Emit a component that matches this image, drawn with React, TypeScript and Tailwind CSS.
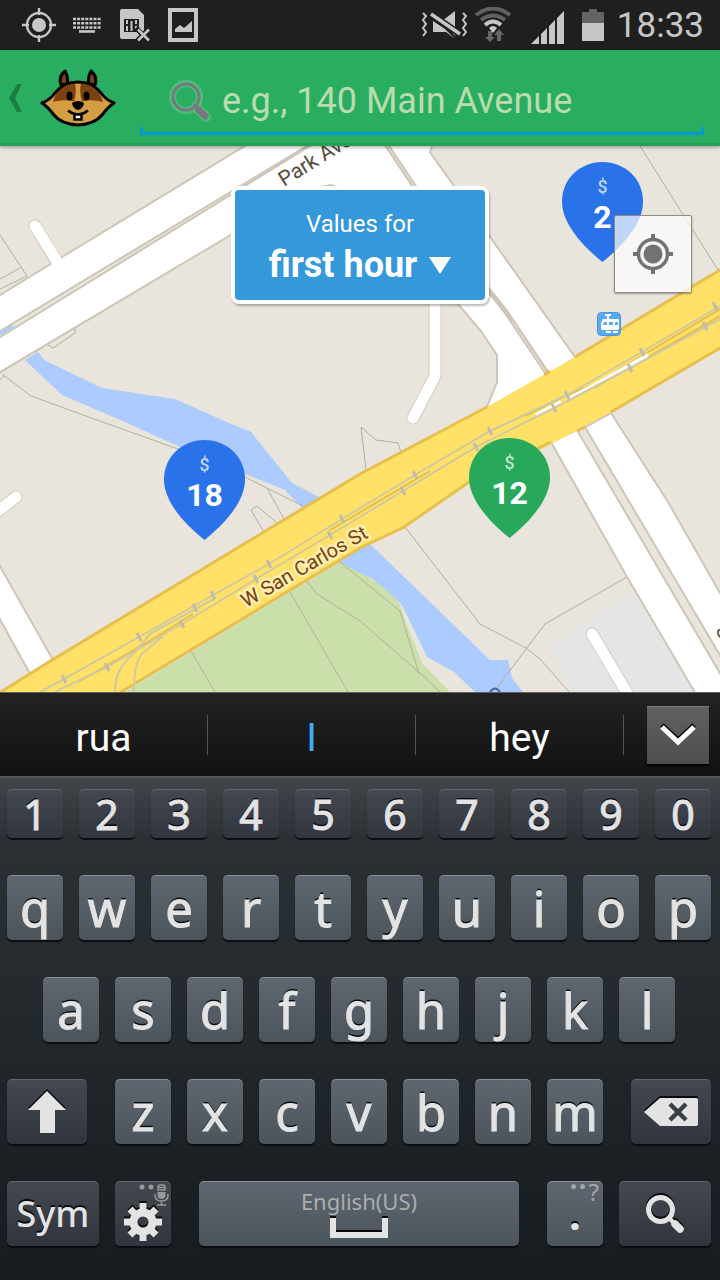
import React from 'react';

const keyBase =
  'flex items-center justify-center rounded-[5px] border-t leading-none text-[#e3e3e3] shadow-[0_2px_1px_#0b0d0f] [text-shadow:0_-2px_0_#08090a]';
const heavyText = '[-webkit-text-stroke-width:1px]';
const darkKey = 'border-[#62666c] bg-linear-to-b from-[#444850] to-[#31353e]';
const lightKey = 'border-[#8b9096] bg-linear-to-b from-[#5e666f] to-[#4c555c]';
const raised = '[filter:drop-shadow(0_-2px_0_#08090a)]';
const flatText = '[text-shadow:none]';

function LetterKey({ label }: { label: string }) {
  return (
    <button type="button" className={`${keyBase} ${heavyText} ${lightKey} h-[65px] min-w-0 flex-1 text-[49px]`}>
      {label}
    </button>
  );
}

function StatusBar() {
  return (
    <div className="flex h-[50px] shrink-0 items-center justify-between bg-[#1f1f1f] pr-4 pl-[22px] text-[#c6c6c6]">
      <div className="flex items-center">
        <svg width="34" height="34" viewBox="0 0 34 34" fill="none" stroke="currentColor" strokeWidth="2.400">
          <circle cx="17" cy="17" r="12" />
          <circle cx="17" cy="17" r="7" fill="currentColor" stroke="none" />
          <path d="M17 0v7M17 27v7M0 17h7M27 17h7" />
        </svg>
        <svg className="ml-4" width="30" height="18" viewBox="0 0 30 18" stroke="currentColor" strokeWidth="2.6">
          <path d="M1 3h28M1 7.300h28M1 11.500h28" strokeDasharray="3 1.100" />
          <path d="M7 15.500h16" />
        </svg>
        <svg className="ml-[18px]" width="32" height="34" viewBox="0 0 32 34">
          <path d="M2 1h16l6 6v16l-5 5-2 3H2Q0 31 0 29V3Q0 1 2 1z" fill="currentColor" />
          <path d="M4 11h15v13H4z" fill="#1f1f1f" />
          <path d="M7 12v4m0 2v5m4.500-10v10m4.500-11v4m0 2v4" stroke="currentColor" strokeWidth="2" />
          <path d="M16 20l14 14M30 20L16 34" stroke="#1f1f1f" strokeWidth="5" />
          <path d="M18 21.500l11 11M29 21.500l-11 11" stroke="currentColor" strokeWidth="2.600" />
        </svg>
        <svg className="ml-4" width="30" height="34" viewBox="0 0 30 34">
          <path d="M2 2h26v30H2z" fill="none" stroke="currentColor" strokeWidth="4" />
          <path d="M7 24v-3l5-4 4 3 8-7v11z" fill="currentColor" />
        </svg>
      </div>
      <div className="flex items-center">
        <svg width="48" height="32" viewBox="0 0 48 32">
          <path d="M2 4l3 3-3 4 3 4-3 4 3 4-3 4M42 4l3 3-3 4 3 4-3 4 3 4-3 4" fill="none" stroke="currentColor" strokeWidth="2" />
          <path d="M34 2v25L21 12zM12 12l12 8 10 10-9-7H12z" fill="currentColor" />
          <path d="M10 5l30 21" stroke="#1f1f1f" strokeWidth="7" />
          <path d="M10 5l29 20" stroke="currentColor" strokeWidth="3.500" />
        </svg>
        <svg className="ml-1" width="38" height="36" viewBox="0 0 38 36" fill="none">
          <path d="M3 8Q20-5 37 8M8 13Q20 4 32 13" stroke="#616161" strokeWidth="4" />
          <path d="M12 18q8-7 16 0" stroke="currentColor" strokeWidth="4" />
          <path d="M16 21q4-4 8 0l-4 5z" fill="currentColor" />
          <path d="M15 24h4v6h3l-5 5-5-5h3zM24 34v-6h-3l5-6 5 6h-3v6z" fill="#666" />
        </svg>
        <svg className="mt-[3px] ml-5" width="34" height="34" viewBox="0 0 34 34" fill="currentColor">
          <path d="M0 34l8-8v8zM10 24l6-6v16h-6zM18 16l6-6v24h-6zM26 8l7-7v33h-7z" />
        </svg>
        <svg className="mb-px ml-4" width="24" height="34" viewBox="0 0 24 34">
          <path d="M8 1h8v3h7v12H1V4h7z" fill="#646464" />
          <path d="M1 15h22v18H1z" fill="currentColor" />
        </svg>
        <span className="ml-3 text-[35px] leading-none">18:33</span>
      </div>
    </div>
  );
}

function ChipmunkLogo() {
  return (
    <svg width="76" height="58" viewBox="0 0 76 58" aria-hidden="true">
      <g stroke="#000" strokeWidth="3" strokeLinejoin="round">
        <path d="M21 16Q18 8 25 2q4 7 2 13zM55 16Q58 8 51 2q-4 7-2 13z" fill="#7b4312" />
        <path d="M2 34Q10 31 15 24 24 13 38 13t23 11q5 7 13 10-6 4-12 12-7 9-24 10-17-1-24-10Q8 38 2 34z" fill="#d69e42" />
      </g>
      <path d="M13 33Q17 17 35 14.500q2 8-1 18Q24 30 13 33zM63 33Q59 17 41 14.500q-2 8 1 18Q52 30 63 33z" fill="#7b4312" />
      <ellipse cx="29.500" cy="27" rx="3" ry="4.500" />
      <ellipse cx="46.500" cy="27" rx="3" ry="4.500" />
      <path d="M32 34q6-4 12 0-1 6-6 7-5-1-6-7z" />
      <path d="M28 41.500q10 8 20 0" fill="none" stroke="#000" strokeWidth="2.500" />
      <path d="M34.500 45.500h7v5h-7z" fill="#fff" stroke="#000" strokeWidth="2.500" />
    </svg>
  );
}

function Header() {
  return (
    <header className="relative z-10 flex h-24 shrink-0 items-center border-b-3 border-[#25a056] bg-[#29ae61] pr-4 pl-2 shadow-[0_1px_4px_#0006]">
      <button type="button" aria-label="Back" className="flex items-center pt-[3px]">
        <svg width="15" height="28" viewBox="0 0 15 28">
          <path d="M9 0h5L7 14l7 14H9L1 14z" fill="#1c7e45" />
        </svg>
        <span className="ml-[17px]">
          <ChipmunkLogo />
        </span>
      </button>
      <div className="ml-6 flex h-full min-w-0 flex-1 flex-col justify-end pb-2">
        <label className="flex h-[68px] items-center pt-4 pl-[28px]">
          <svg className="shrink-0" width="44" height="44" viewBox="0 0 44 44" aria-label="Search" fill="none" strokeLinecap="round">
            <g stroke="#6bc48f" opacity=".6">
              <circle cx="18" cy="18" r="13.500" strokeWidth="7" />
              <path d="M28 28l10 10" strokeWidth="10" />
            </g>
            <g stroke="#777a7c">
              <circle cx="18" cy="18" r="13" strokeWidth="3" />
              <path d="M27 27l3 3" strokeWidth="4" />
              <path d="M31 31l6 6" strokeWidth="7" />
            </g>
          </svg>
          <input
            type="text"
            placeholder="e.g., 140 Main Avenue"
            className="ml-[10px] w-full min-w-0 bg-transparent text-[36px] leading-none text-white outline-none placeholder:text-[#b9dcaf]"
          />
        </label>
        <div className="h-2 border-x-3 border-b-3 border-[#0899d2]" />
      </div>
    </header>
  );
}

const railTicks: [number, number][] = [
  [64, 679], [139, 637], [213, 595], [269, 564], [342, 519], [415, 475], [490, 431], [567, 395], [642, 352], [715, 306],
  [107, 667], [182, 624], [195, 608], [256, 579], [330, 535], [403, 491], [476, 447], [554, 408], [630, 368], [705, 326],
];

function StreetMap() {
  return (
    <svg className="absolute inset-0 h-full w-full" viewBox="0 146 720 546" preserveAspectRatio="xMidYMid slice" role="img" aria-label="Map">
      <path d="M0 146h720v546H0z" fill="#e9e5dc" />
      <path d="M550 645l83-53 62 100H574z" fill="#e5e5e5" />
      <path
        d="M25 360l13-8 6 8 58 28 73 11 47 21 29 12 41 51 27 14 51 47 120 116h18l4 18 11 14h-48l-21-20-27-15-24-50-4-5-29-25h-20l-12-13-35-55-18-19-40-16-65-27-55-25-63-27z"
        fill="#accbff"
      />
      <path d="M125 692L340 562l18 10 10 5 15 10 16 15 6 18 17 43 28 29z" fill="#cbdfab" />
      <g fill="none" stroke="#b4ae9b" strokeWidth="1">
        <path d="M0 380l5-5M2 374l29 22 66 24 81 29 67 28 58 29M0 235l27 41M0 279l20-11M0 289l27-13M48 345l5 3 22-15v-4M640 146l78 124M267 488l17 31M264 532l-13-22 6-4 20 17" />
        <path d="M405 527l75 97 46 24 15 12 28 32M627 577l-82 47-19 25-29 39M306 580l11 14 43 27 61 53 19 18M340 562l60 49 19 63M290 592l58 100M191 651l24 41M366 470l-5-43 15 13 22 3 3 9" />
      </g>
      <path d="M35 226l24 40M435 300v76l-22 42M-6 514l22-17M592 634l38 64" fill="none" stroke="#d3ccbf" strokeWidth="13" strokeLinecap="round" strokeLinejoin="round" />
      <g fill="#fff" stroke="#cdc6b8" strokeWidth="2">
        <path d="M-3 297l65-40 186-113h62L-3 333zM-3 339l316-195h120l-3 8 145 205v60l-88-10 10-25v-27l-16-24-23-27-78-104-49-15-26 5-76 46L-3 374z" />
        <path d="M551 442l26-12 147 250v16h-27l-70-119zM585 427l26-14 57 89 56 98v62zM-3 561l56 99-12 30-12-18-32-58z" />
      </g>
      <path d="M0 334l13-8" stroke="#accbff" strokeWidth="3" />
      <path d="M386 144l28 42 73 102 19 24 41 61" fill="none" stroke="#cdc6b8" strokeWidth="5" />
      <path d="M386 144l28 42M512 321l33 50" fill="none" stroke="#e9e5dc" strokeWidth="1" />
      <path d="M35 226l26 42M435 300v76l-22 42M-6 514l22-17M592 634l38 64" fill="none" stroke="#fff" strokeWidth="11" strokeLinecap="round" strokeLinejoin="round" />
      <path
        d="M-4 695l56-35 308-186 127-67 88-50 150-90v78l-114 67-33 18-38 20-78 36-58 41-44 21L116 695z"
        fill="#ffe168"
      />
      <path
        d="M-4 695l56-35 308-186 127-67M544 375l6-4M575 357l150-90M725 345l-114 67M585 427l-8 4M551 442l-79 38-68 47-44 21L116 695"
        fill="none"
        stroke="#e7bf4f"
        strokeWidth="3"
      />
      <g fill="none" stroke="#e5bd4b" strokeWidth="2">
        <path d="M78 682l75-43 40-25M330 530l100-59M525 416l40-20 28-11 127-76M594 388l126-72" />
      </g>
      <path d="M536 415l25-13M570 398l23-12 55-31" stroke="#fff" strokeWidth="4" fill="none" />
      <g fill="none" stroke="#cfc9a0" strokeWidth="2">
        <path d="M40 692l24-13 75-42 74-42 56-31 73-45 73-44 75-44 77-36 75-43 78-46M55 692l52-25 75-43 74-45 74-44 73-44 73-44 78-39 76-40 90-49" />
        <path d="M115 692q0-20 13-33 8-8 23-26l63-34M134 692q0-30 8-38l21-18" />
        {railTicks.map(([x, y]) => (
          <path key={`${x}-${y}`} d={`M${x - 2} ${y - 4}l4 8`} stroke="#c1bdae" strokeWidth="3" />
        ))}
      </g>
      <g>
        <text fontSize="21" transform="translate(284 187) rotate(-32)" fill="#554d3b">Park Ave</text>
        <text fontSize="20" transform="translate(246 608) rotate(-30)" fill="#75400f" stroke="#ffeeb0" strokeWidth="5" strokeLinejoin="round" paintOrder="stroke">
          W San Carlos St
        </text>
        <text fontSize="21" transform="translate(715 630) rotate(60)" fill="#554d3b">S</text>
      </g>
      <path d="M490 692q5-7 10 0" fill="none" stroke="#49679c" strokeWidth="2" />
      <g>
        <rect x="597.500" y="312.500" width="23" height="23" rx="4" fill="#58aaf4" stroke="#4594dc" />
        <path d="M605 315h6M608 315v5" stroke="#fff" strokeWidth="2" />
        <path d="M603 319h15q1 0 1 1v9l-2 1h-15l-1-1v-6z" fill="#fff" />
        <path d="M604 322h3v3h-4zM609 322h4v3h-4zM615 322h3v3h-3zM605 327h13M603 327v3" fill="#58aaf4" />
        <path d="M606 332h12" stroke="#fff" strokeWidth="2" strokeDasharray="5 2" />
      </g>
    </svg>
  );
}

function Pin({ price, fill, place }: { price: number; fill: string; place: string }) {
  return (
    <button type="button" className={`absolute h-[100px] w-[81px] text-white ${place}`}>
      <svg className={`absolute inset-0 ${fill}`} width="81" height="100" viewBox="0 0 81 100" fill="currentColor">
        <path d="M40.500 0C63 0 81 17 81 39.500 81 63 58 86 40.500 100 23 86 0 63 0 39.500 0 17 18 0 40.500 0z" />
      </svg>
      <span className="relative flex h-full flex-col items-center pt-[14px]">
        <span className="text-[18px] leading-[22px] font-medium opacity-70">$</span>
        <span className="text-[32px] leading-[38px] font-bold">{price}</span>
      </span>
    </button>
  );
}

function MapArea() {
  return (
    <main className="relative min-h-[400px] flex-1 overflow-hidden bg-[#e9e5dc]">
      <StreetMap />
      <Pin price={2} fill="text-[#2a72ea]" place="top-[16px] left-[562px]" />
      <Pin price={18} fill="text-[#2a72ea]" place="top-[294px] left-[164px]" />
      <Pin price={12} fill="text-[#27a85b]" place="top-[292px] left-[469px]" />
      <button
        type="button"
        className="absolute top-10 left-1/2 flex h-[118px] w-[258px] -translate-x-1/2 flex-col items-center rounded-lg border-4 border-white bg-[#3498db] pt-[19px] text-white shadow-[1px_2px_2px_#0004]"
      >
        <span className="text-2xl leading-[30px]">Values for</span>
        <span className="flex items-center gap-3 text-[36px] leading-[52px] font-bold">
          first hour
          <svg width="22" height="17" viewBox="0 0 22 17" fill="currentColor">
            <path d="M0 0h22L11 17z" />
          </svg>
        </span>
      </button>
      <button
        type="button"
        aria-label="My location"
        className="absolute top-[69px] right-7 flex size-[78px] items-center justify-center rounded-xs border border-[#8d8b87] bg-white/70 shadow-[0_1px_2px_#0005]"
      >
        <svg width="40" height="40" viewBox="0 0 40 40" fill="none" stroke="#737373">
          <circle cx="20" cy="20" r="14.500" strokeWidth="3.500" />
          <circle cx="20" cy="20" r="9.500" fill="#737373" stroke="none" />
          <path d="M20 0v6M20 34v6M0 20h6M34 20h6" strokeWidth="4" />
        </svg>
      </button>
    </main>
  );
}

function Suggestions() {
  const word = 'h-10 flex-1 border-r border-[#555] pt-1 leading-none';
  return (
    <div className="flex h-[84px] items-center border-t border-[#5d605d] bg-linear-to-b from-[#222] to-[#121212] text-[39px] leading-none text-white [font-family:Roboto,sans-serif]">
      <button type="button" className={word}>rua</button>
      <button type="button" className={`${word} text-[#47aaf8]`}>I</button>
      <button type="button" className={word}>hey</button>
      <div className="flex w-24 justify-center pr-[11px] pl-[23px]">
        <button type="button" aria-label="Hide suggestions" className="flex h-[58px] w-full items-center justify-center border-t border-[#7a7a7a] bg-linear-to-b from-[#616161] to-[#4e4e4e] shadow-[0_2px_1px_#000]">
          <svg className={raised} width="36" height="21" viewBox="0 0 36 21" fill="none" stroke="#fff" strokeWidth="5">
            <path d="M2 2l16 15L34 2" />
          </svg>
        </button>
      </div>
    </div>
  );
}

function Keyboard() {
  return (
    <section aria-label="Keyboard" className="shrink-0 [font-family:'Noto_Sans',sans-serif]">
      <Suggestions />
      <div className="flex flex-col gap-[37px] border-t-2 border-[#54585a] bg-[linear-gradient(#42464a_0,#2b3034_60px,#262b2f_190px,#1b2024_400px,#181c20)] pt-[11px] pb-[34px]">
        <div className="flex gap-4 pr-[9px] pl-[7px]">
          {[...'1234567890'].map((digit) => (
            <button key={digit} type="button" className={`${keyBase} ${heavyText} ${darkKey} h-[49px] min-w-0 flex-1 text-[41px]`}>
              {digit}
            </button>
          ))}
        </div>
        <div className="flex gap-4 pr-[9px] pl-[7px]">
          {[...'qwertyuiop'].map((letter) => (
            <LetterKey key={letter} label={letter} />
          ))}
        </div>
        <div className="flex gap-4 pr-[45px] pl-[43px]">
          {[...'asdfghjkl'].map((letter) => (
            <LetterKey key={letter} label={letter} />
          ))}
        </div>
        <div className="flex gap-7 pr-[9px] pl-[7px]">
          <button type="button" aria-label="Shift" className={`${keyBase} ${darkKey} h-[65px] w-20`}>
            <svg className={raised} width="38" height="42" viewBox="0 0 38 42" fill="currentColor">
              <path d="M19 0l19 19H27v23H12V19H0z" />
            </svg>
          </button>
          <div className="flex min-w-0 flex-1 gap-4">
            {[...'zxcvbnm'].map((letter) => (
              <LetterKey key={letter} label={letter} />
            ))}
          </div>
          <button type="button" aria-label="Backspace" className={`${keyBase} ${darkKey} h-[65px] w-20`}>
            <svg className={raised} width="54" height="28" viewBox="0 0 54 28">
              <path d="M16 0h36q2 0 2 2v24q0 2-2 2H16L0 14z" fill="currentColor" />
              <path d="M26 6l16 16M42 6L26 22" stroke="#3a3f47" strokeWidth="4.500" />
            </svg>
          </button>
        </div>
        <div className="flex gap-7 pr-[9px] pl-[7px]">
          <div className="flex gap-4">
            <button type="button" className={`${keyBase} ${darkKey} h-[65px] w-[92px] text-[36px] font-medium`}>Sym</button>
            <button type="button" aria-label="Keyboard settings" className={`${keyBase} ${darkKey} relative h-[65px] w-14 pt-[15px]`}>
              <svg className={raised} width="38" height="38" viewBox="-19 -19 38 38">
                <circle r="9.500" fill="none" stroke="currentColor" strokeWidth="8" />
                <path d="M0-19v8M0 19v-8M-19 0h8M19 0h-8M-13-13l5 5M13 13l-5-5M13-13l-5 5M-13 13l5-5" stroke="currentColor" strokeWidth="7" />
              </svg>
              <svg className="absolute top-px right-[2px]" width="30" height="24" viewBox="0 0 30 24" fill="none" stroke="#999" strokeWidth="1.500">
                <circle cx="3" cy="4" r="2.500" fill="#999" stroke="none" />
                <circle cx="12" cy="4" r="2.500" fill="#999" stroke="none" />
                <path d="M19 7V4q0-2 2-2h3q2 0 2 2v3zM19 4.500h7M18 22h9M16 11v1q0 6 6.500 6t6.500-6v-1M22.500 18v4" />
                <path d="M18.500 9h8v3q0 4-4 4t-4-4z" fill="#999" stroke="none" />
              </svg>
            </button>
          </div>
          <button type="button" className={`${keyBase} ${lightKey} h-[65px] min-w-0 flex-1 flex-col gap-[6px] text-[22px]`}>
            <span className={`text-[#adadad] ${flatText}`}>English(US)</span>
            <svg className={raised} width="58" height="20" viewBox="0 0 58 20" fill="none" stroke="currentColor" strokeWidth="6">
              <path d="M3 0v17h52V0" />
            </svg>
          </button>
          <div className="flex gap-4">
            <button type="button" className={`${keyBase} ${lightKey} relative h-[65px] w-14 text-[42px] font-bold`}>
              .
              <span className={`absolute top-0 right-[4px] flex items-start gap-[3px] text-[24px] leading-5 font-normal text-[#a6a6a6] ${flatText}`}>
                <svg className="mt-[2px]" width="15" height="5" viewBox="0 0 15 5" fill="currentColor">
                  <circle cx="2.500" cy="2.500" r="2.500" />
                  <circle cx="11.500" cy="2.500" r="2.500" />
                </svg>
                ?
              </span>
            </button>
            <button type="button" aria-label="Search" className={`${keyBase} ${darkKey} h-[65px] w-[92px]`}>
              <svg className={raised} width="38" height="38" viewBox="0 0 38 38" fill="none" stroke="currentColor">
                <circle cx="14.500" cy="14.500" r="12" strokeWidth="5" />
                <path d="M24 24l4 4" strokeWidth="4" />
                <path d="M29 29l5 5" strokeWidth="7.500" strokeLinecap="round" />
              </svg>
            </button>
          </div>
        </div>
      </div>
    </section>
  );
}

export default function App() {
  return (
    <div className="flex min-h-screen flex-col bg-black [font-family:Roboto,sans-serif]">
      <StatusBar />
      <Header />
      <MapArea />
      <Keyboard />
    </div>
  );
}
